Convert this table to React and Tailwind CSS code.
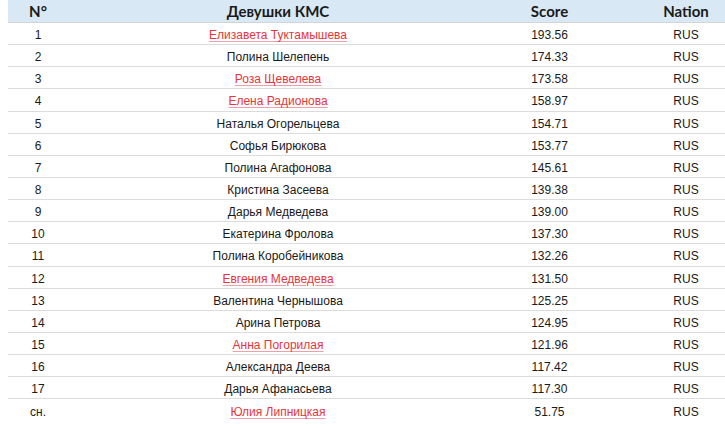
import React from 'react';

const ROWS = [
    { n: '1', name: 'Елизавета Туктамышева', score: '193.56', link: true },
    { n: '2', name: 'Полина Шелепень', score: '174.33' },
    { n: '3', name: 'Роза Щевелева', score: '173.58', link: true },
    { n: '4', name: 'Елена Радионова', score: '158.97', link: true },
    { n: '5', name: 'Наталья Огорельцева', score: '154.71' },
    { n: '6', name: 'Софья Бирюкова', score: '153.77' },
    { n: '7', name: 'Полина Агафонова', score: '145.61' },
    { n: '8', name: 'Кристина Засеева', score: '139.38' },
    { n: '9', name: 'Дарья Медведева', score: '139.00' },
    { n: '10', name: 'Екатерина Фролова', score: '137.30' },
    { n: '11', name: 'Полина Коробейникова', score: '132.26' },
    { n: '12', name: 'Евгения Медведева', score: '131.50', link: true },
    { n: '13', name: 'Валентина Чернышова', score: '125.25' },
    { n: '14', name: 'Арина Петрова', score: '124.95' },
    { n: '15', name: 'Анна Погорилая', score: '121.96', link: true },
    { n: '16', name: 'Александра Деева', score: '117.42' },
    { n: '17', name: 'Дарья Афанасьева', score: '117.30' },
    { n: 'сн.', name: 'Юлия Липницкая', score: '51.75', link: true },
];

const cols = 'grid grid-cols-[60px_420px_123px_1fr] items-center';

const App = () => {
    return (
        <div className="w-[725px] h-[429px] overflow-hidden bg-white pl-2">
            {/* Header */}
            <div className={`${cols} h-[23px] bg-[#d9e8f5] border-b border-[#d4d4d4] text-[15px] font-bold text-[#1a1a1a] font-['Lato',sans-serif]`}>
                <div className="text-center">N°</div>
                <div className="text-center">Девушки КМС</div>
                <div className="text-center">Score</div>
                <div className="text-center pl-[36px]">Nation</div>
            </div>

            {/* Rows */}
            {ROWS.map((r, i) => (
                <div
                    key={r.n}
                    className={`${cols} h-[22.15px] pt-[3px] text-[12px] text-[#1a1a1a] font-['Liberation_Sans',sans-serif] ${i < ROWS.length - 1 ? 'border-b border-[#dcdcdc]' : ''}`}
                >
                    <div className="text-center">{r.n}</div>
                    <div className="text-center">
                        {r.link ? (
                            <a className="text-[#e8343a] underline decoration-[#f0a0a8] underline-offset-2">{r.name}</a>
                        ) : r.name}
                    </div>
                    <div className="text-center">{r.score}</div>
                    <div className="text-center pl-[36px]">RUS</div>
                </div>
            ))}
        </div>
    );
};

export default App;
